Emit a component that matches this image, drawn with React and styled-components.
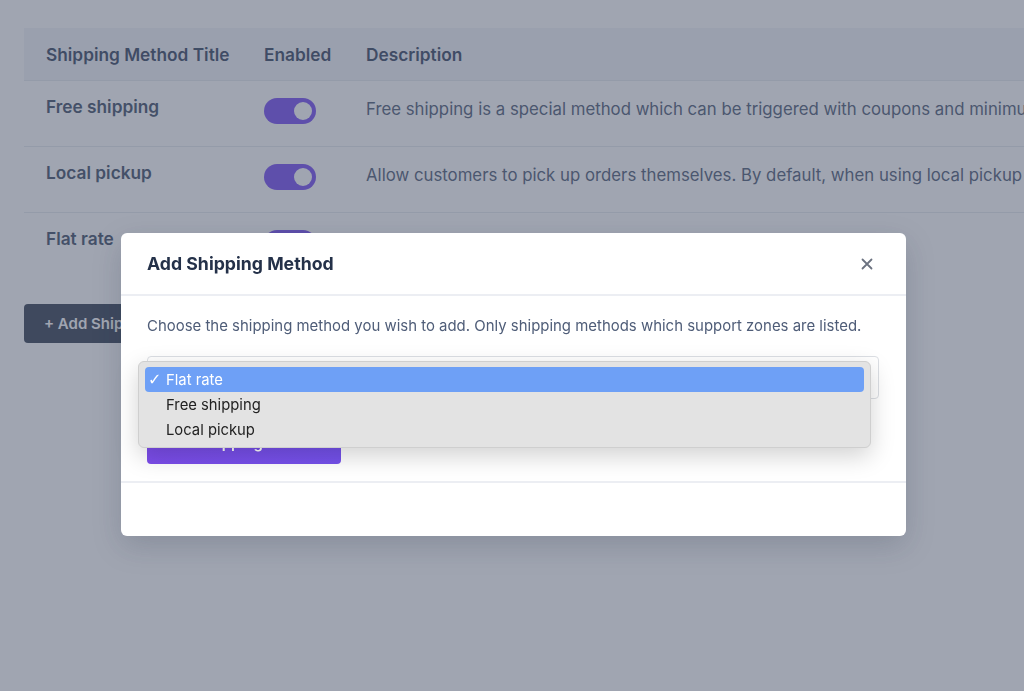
import React from "react";
import styled, { createGlobalStyle } from "styled-components";

const GlobalStyle = createGlobalStyle`
  * { box-sizing: border-box; }
  html, body {
    margin: 0;
    height: 100%;
    overflow: hidden;
    background: #ffffff;
    font-family: Inter, "Noto Sans", sans-serif;
    color: #1e293b;
  }
`;

const methods = [
  {
    title: "Free shipping",
    description:
      "Free shipping is a special method which can be triggered with coupons and minimum spends.",
  },
  {
    title: "Local pickup",
    description:
      "Allow customers to pick up orders themselves. By default, when using local pickup store base taxes will apply.",
  },
  {
    title: "Flat rate",
    description: "Lets you charge a fixed rate for shipping.",
  },
];

const options = ["Flat rate", "Free shipping", "Local pickup"];

const App = () => {
  return (
    <>
      <GlobalStyle />
      <Page>
        <Table>
          <HeadCell>Shipping Method Title</HeadCell>
          <HeadCell>Enabled</HeadCell>
          <HeadCell>Description</HeadCell>
          {methods.map((m, i) => (
            <React.Fragment key={m.title}>
              <TitleCell $last={i === methods.length - 1}>{m.title}</TitleCell>
              <Cell $last={i === methods.length - 1}>
                <Toggle>
                  <Knob />
                </Toggle>
              </Cell>
              <DescCell $last={i === methods.length - 1}>{m.description}</DescCell>
            </React.Fragment>
          ))}
        </Table>
        <DarkButton>+ Add Shipping Method</DarkButton>
      </Page>

      <Overlay>
        <Modal>
          <ModalHeader>
            <ModalTitle>Add Shipping Method</ModalTitle>
            <CloseButton aria-label="Close">
              <svg width="12" height="12" viewBox="0 0 12 12">
                <path
                  d="M1.5 1.5 L10.5 10.5 M10.5 1.5 L1.5 10.5"
                  stroke="#6b7280"
                  strokeWidth="1.8"
                  strokeLinecap="round"
                />
              </svg>
            </CloseButton>
          </ModalHeader>
          <ModalBody>
            <Intro>
              Choose the shipping method you wish to add. Only shipping methods
              which support zones are listed.
            </Intro>
            <SelectWrap>
              <SelectBox>
                <span>Flat rate</span>
                <svg width="10" height="10" viewBox="0 0 10 10">
                  <path
                    d="M1.5 3.5 L5 7 L8.5 3.5"
                    stroke="#333"
                    strokeWidth="1.4"
                    fill="none"
                  />
                </svg>
              </SelectBox>
              <Popup>
                {options.map((o, i) => (
                  <Option key={o} $active={i === 0}>
                    <Check>{i === 0 ? "✓" : ""}</Check>
                    {o}
                  </Option>
                ))}
              </Popup>
            </SelectWrap>
            <PrimaryButton>Add Shipping Method</PrimaryButton>
          </ModalBody>
          <ModalFooter />
        </Modal>
      </Overlay>
    </>
  );
};

export default App;

const Page = styled.div`
  padding: 28px 0 0 24px;
  width: 1400px;
`;

const Table = styled.div`
  display: grid;
  grid-template-columns: 218px 102px 1fr;
`;

const HeadCell = styled.div`
  background: #f2f4f7;
  height: 53px;
  padding: 0 22px;
  display: flex;
  align-items: center;
  font-size: 17.3px;
  font-weight: 600;
  color: #1f3150;
  white-space: nowrap;
  border-bottom: 1px solid #e3e7ed;
`;

const Cell = styled.div`
  height: 66px;
  padding: 17px 22px 0;
  border-bottom: ${(p) => (p.$last ? "none" : "1px solid #e3e7ed")};
`;

const TitleCell = styled(Cell)`
  padding-top: 14px;
  font-size: 17.3px;
  font-weight: 600;
  line-height: 24px;
  color: #2a3a56;
  white-space: nowrap;
`;

const DescCell = styled(Cell)`
  padding-top: 16px;
  font-size: 16.8px;
  line-height: 24px;
  color: #3a4a66;
  white-space: nowrap;
`;

const Toggle = styled.div`
  width: 52px;
  height: 26px;
  border-radius: 13px;
  background: #6638f0;
  display: flex;
  align-items: center;
  justify-content: flex-end;
  padding-right: 4px;
`;

const Knob = styled.div`
  width: 18px;
  height: 18px;
  border-radius: 50%;
  background: #ffffff;
`;

const DarkButton = styled.button`
  margin-top: 25px;
  height: 39px;
  padding: 0 20px;
  border: none;
  border-radius: 4px;
  background: #1e2b40;
  color: #ffffff;
  font-family: inherit;
  font-size: 15px;
  font-weight: 600;
`;

const Overlay = styled.div`
  position: fixed;
  inset: 0;
  background: rgba(88, 97, 118, 0.57);
  display: flex;
  justify-content: center;
  align-items: flex-start;
  padding: 233px 0 0 3px;
`;

const Modal = styled.div`
  width: 785px;
  background: #ffffff;
  border-radius: 6px;
  box-shadow: 0 10px 30px rgba(30, 41, 59, 0.18);
`;

const ModalHeader = styled.div`
  height: 63px;
  padding: 0 33px 0 26px;
  display: flex;
  align-items: center;
  justify-content: space-between;
  border-bottom: 2px solid #eceef3;
`;

const ModalTitle = styled.h2`
  margin: 0;
  font-size: 17.7px;
  font-weight: 700;
  color: #243149;
`;

const CloseButton = styled.button`
  border: none;
  background: none;
  padding: 0;
  display: flex;
  cursor: pointer;
`;

const ModalBody = styled.div`
  padding: 18px 26px 17px;
  border-bottom: 2px solid #eceef3;
`;

const Intro = styled.p`
  margin: 0;
  font-size: 14.95px;
  line-height: 24px;
  color: #4f5d78;
  white-space: nowrap;
`;

const SelectWrap = styled.div`
  position: relative;
  margin-top: 18px;
  width: 732px;
`;

const SelectBox = styled.div`
  height: 43px;
  border: 1px solid #dcdfe4;
  border-radius: 4px;
  display: flex;
  align-items: center;
  justify-content: space-between;
  padding: 0 6px 0 14px;
  font-size: 15px;
  color: #333;
`;

const Popup = styled.div`
  position: absolute;
  left: -9px;
  top: 5px;
  width: 733px;
  padding: 5px 6px;
  background: #e3e3e3;
  border: 1px solid #cfcfcf;
  border-radius: 6px;
  box-shadow: 0 8px 24px rgba(0, 0, 0, 0.18);
  font-family: Inter, "Liberation Sans", sans-serif;
`;

const Option = styled.div`
  height: 25px;
  display: flex;
  align-items: center;
  border-radius: 4px;
  font-size: 14.8px;
  color: ${(p) => (p.$active ? "#ffffff" : "#222222")};
  background: ${(p) => (p.$active ? "#6ea0f6" : "transparent")};
`;

const Check = styled.span`
  width: 21px;
  padding-left: 3px;
  font-size: 16px;
  font-weight: 700;
  font-family: "DejaVu Sans", sans-serif;
`;

const PrimaryButton = styled.button`
  display: block;
  margin-top: 21px;
  width: 194px;
  height: 44px;
  border: none;
  border-radius: 4px;
  background: linear-gradient(90deg, #7c4dea, #7552ec);
  color: #ffffff;
  font-family: inherit;
  font-size: 15px;
  font-weight: 600;
`;

const ModalFooter = styled.div`
  height: 53px;
`;
